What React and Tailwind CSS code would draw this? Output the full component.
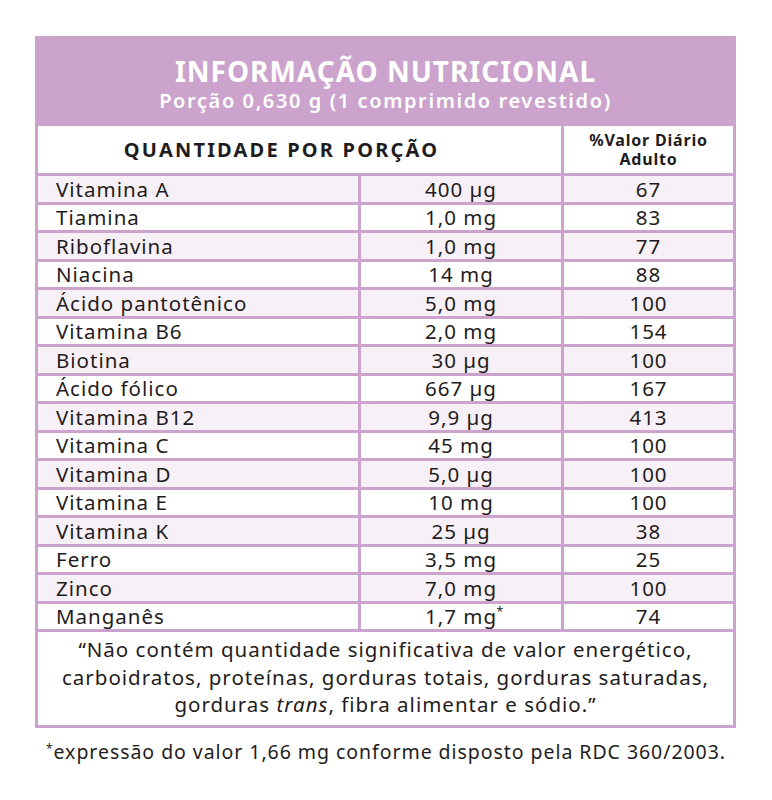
import React from "react";

// rows of the nutrition table: name, amount per portion, %VD
const rows = [
  ["Vitamina A", "400 µg", "67"],
  ["Tiamina", "1,0 mg", "83"],
  ["Riboflavina", "1,0 mg", "77"],
  ["Niacina", "14 mg", "88"],
  ["Ácido pantotênico", "5,0 mg", "100"],
  ["Vitamina B6", "2,0 mg", "154"],
  ["Biotina", "30 µg", "100"],
  ["Ácido fólico", "667 µg", "167"],
  ["Vitamina B12", "9,9 µg", "413"],
  ["Vitamina C", "45 mg", "100"],
  ["Vitamina D", "5,0 µg", "100"],
  ["Vitamina E", "10 mg", "100"],
  ["Vitamina K", "25 µg", "38"],
  ["Ferro", "3,5 mg", "25"],
  ["Zinco", "7,0 mg", "100"],
  ["Manganês", "1,7 mg", "74", true],
];

const App = () => {
  return (
    <div className="min-h-screen bg-white pt-[36px] pl-[35px] text-[#1f1c20] font-['Noto_Sans',sans-serif]">
      <div className="w-[701px] border-[3px] border-t-0 border-[#cba3cd]">
        {/* purple header */}
        <div className="bg-[#cba3cd] h-[90px] flex flex-col items-center pt-[18px] text-white">
          <h1 className="text-[28px] font-bold leading-[34px] tracking-[1px]">
            INFORMAÇÃO NUTRICIONAL
          </h1>
          <p className="text-[20px] font-semibold leading-[26px] tracking-[1.6px]">
            Porção 0,630 g (1 comprimido revestido)
          </p>
        </div>

        {/* column headers */}
        <div className="flex h-[50px] border-b-[3px] border-[#cba3cd]">
          <div className="w-[523px] flex items-center justify-center pr-[36px] pt-[1px] text-[20px] font-bold tracking-[2.2px]">
            QUANTIDADE POR PORÇÃO
          </div>
          <div className="flex-1 border-l-[3px] border-[#cba3cd] flex flex-col items-center justify-center text-[16px] font-bold leading-[19px] tracking-[0.8px] pt-[1px]">
            <span>%Valor Diário</span>
            <span>Adulto</span>
          </div>
        </div>

        {/* data rows */}
        {rows.map(([name, amount, vd, star], i) => (
          <div
            key={name}
            className={`flex h-[28.5px] border-b-[3px] border-[#cba3cd] text-[20.5px] leading-[26px] tracking-[1px] ${
              i % 2 === 0 ? "bg-[#f7f0f7]" : "bg-white"
            }`}
          >
            <div className="w-[320px] pl-[18px] flex items-center">{name}</div>
            <div className="w-[203px] border-l-[3px] border-[#cba3cd] flex items-center justify-center">
              <span className="relative">
                {amount}
                {star && <span className="absolute -right-[7px] -top-[4px] text-[12px]">*</span>}
              </span>
            </div>
            <div className="flex-1 border-l-[3px] border-[#cba3cd] flex items-center justify-center">
              {vd}
            </div>
          </div>
        ))}

        {/* notes */}
        <div className="h-[93px] flex flex-col items-center justify-center text-[20.5px] leading-[27.5px] tracking-[1px] text-center pb-[2px]">
          <p>“Não contém quantidade significativa de valor energético,</p>
          <p>carboidratos, proteínas, gorduras totais, gorduras saturadas,</p>
          <p>
            gorduras <i>trans</i>, fibra alimentar e sódio.”
          </p>
        </div>
      </div>

      <p className="mt-[11px] pl-[11px] text-[19.5px] leading-[26px] tracking-[0.95px]">
        <span className="relative -top-[6px] text-[12px]">*</span>expressão do valor 1,66 mg conforme disposto pela RDC 360/2003.
      </p>
    </div>
  );
};

export default App;
